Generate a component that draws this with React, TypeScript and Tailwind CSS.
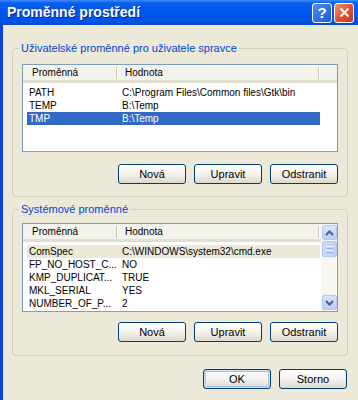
import React from 'react';

type Row = { name: string; value: string; selected?: 'focus' | 'blur' };

const userRows: Row[] = [
  { name: 'PATH', value: 'C:\\Program Files\\Common files\\Gtk\\bin' },
  { name: 'TEMP', value: 'B:\\Temp' },
  { name: 'TMP', value: 'B:\\Temp', selected: 'focus' },
];

const systemRows: Row[] = [
  { name: 'ComSpec', value: 'C:\\WINDOWS\\system32\\cmd.exe', selected: 'blur' },
  { name: 'FP_NO_HOST_C...', value: 'NO' },
  { name: 'KMP_DUPLICAT...', value: 'TRUE' },
  { name: 'MKL_SERIAL', value: 'YES' },
  { name: 'NUMBER_OF_P...', value: '2' },
];

const XpButton: React.FC<{ label: string; isDefault?: boolean }> = ({ label, isDefault }) => (
  <button
    className={`w-[68px] h-[20px] rounded-[3px] border border-[#003C74] bg-gradient-to-b from-[#FFFFFF] via-[#F4F3EE] to-[#DCD8CC] text-[11px] leading-none text-black ${
      isDefault ? 'shadow-[inset_0_0_0_1px_#CDE3FB,inset_0_0_0_2px_#A5C2EE]' : ''
    }`}
  >
    {label}
  </button>
);

const HeaderDivider = () => (
  <div className="flex h-[12px] self-center">
    <div className="w-px bg-[#C7C5B2]" />
    <div className="w-px bg-white" />
  </div>
);

const ListHeader: React.FC = () => (
  <div className="flex h-[18px] items-center bg-[#F3F2EB] border-b-[3px] border-[#E2DFD0] text-[10px]">
    <div className="w-[93px] pl-[9px] text-black">Proměnná</div>
    <HeaderDivider />
    <div className="w-[200px] pl-[7px] text-black">Hodnota</div>
    <HeaderDivider />
    <div className="flex-1" />
  </div>
);

const ListRows: React.FC<{ rows: Row[] }> = ({ rows }) => (
  <div className="mt-[3px] ml-[4px] w-[293px] text-[10px]">
    {rows.map((r) => (
      <div
        key={r.name}
        className={`flex h-[13px] items-center whitespace-nowrap ${
          r.selected === 'focus'
            ? 'bg-[#316AC5] text-white'
            : r.selected === 'blur'
            ? 'bg-[#ECE9D8] text-black'
            : 'text-black'
        }`}
      >
        <div className="w-[95px] pl-[2px]">{r.name}</div>
        <div>{r.value}</div>
      </div>
    ))}
  </div>
);

const ScrollArrow: React.FC<{ up?: boolean }> = ({ up }) => (
  <div className="h-[15px] w-[15px] rounded-[2px] border border-[#B3C6F4] bg-gradient-to-b from-[#D9E5FD] to-[#B9CEF9] flex items-center justify-center">
    <svg width="9" height="6" viewBox="0 0 9 6">
      <path
        d={up ? 'M1 5 L4.5 1.5 L8 5' : 'M1 1 L4.5 4.5 L8 1'}
        stroke="#4D6185"
        strokeWidth="2"
        fill="none"
      />
    </svg>
  </div>
);

const Scrollbar: React.FC = () => (
  <div className="w-[16px] flex flex-col items-center bg-[#F7F6F1] pt-[1px] pb-[1px]">
    <ScrollArrow up />
    <div className="mt-[1px] h-[16px] w-[15px] rounded-[2px] border border-[#B3C6F4] bg-gradient-to-r from-[#CBDAFC] to-[#BCD0F9] flex flex-col items-center justify-center gap-[1px]">
      <div className="h-px w-[7px] bg-[#EEF4FE]" />
      <div className="h-px w-[7px] bg-[#8CB0F8]" />
      <div className="h-px w-[7px] bg-[#EEF4FE]" />
      <div className="h-px w-[7px] bg-[#8CB0F8]" />
    </div>
    <div className="flex-1" />
    <ScrollArrow />
  </div>
);

const GroupBox: React.FC<{ title: string; className?: string; children: React.ReactNode }> = ({
  title,
  className,
  children,
}) => (
  <fieldset className={`border border-[#D0D0BF] rounded-[4px] px-[9px] ${className ?? ''}`}>
    <legend className="ml-[-3px] px-[2px] text-[#0046D5] leading-[13px]">{title}</legend>
    {children}
  </fieldset>
);

export default function App() {
  return (
    <div className="w-[358px] h-[400px] overflow-hidden bg-[#ECE9D8] text-[11px] font-['Liberation_Sans',Arial,sans-serif]">
      {/* title bar */}
      <div className="h-[25px] flex items-center bg-[linear-gradient(180deg,#3C8CFA_0%,#0A5EEC_12%,#0058EE_45%,#0054E6_85%,#0147D2_100%)] pl-[7px] pr-[4px]">
        <div className="flex-1 text-white font-bold text-[14px] [text-shadow:1px_1px_0_#0A1E8A]">
          Proměnné prostředí
        </div>
        <div className="flex gap-[2px]">
          <div className="w-[20px] h-[20px] rounded-[3px] border border-white bg-gradient-to-br from-[#4C8BF5] to-[#1D5BD8] flex items-center justify-center text-white font-bold text-[15px] leading-none">
            ?
          </div>
          <div className="w-[20px] h-[20px] rounded-[3px] border border-white bg-gradient-to-br from-[#F0907A] via-[#E2502D] to-[#C8391A] flex items-center justify-center">
            <svg width="11" height="11" viewBox="0 0 11 11">
              <path d="M1.5 1.5 L9.5 9.5 M9.5 1.5 L1.5 9.5" stroke="white" strokeWidth="2.2" />
            </svg>
          </div>
        </div>
      </div>

      {/* body */}
      <div className="h-[375px] border-l-[3px] border-[#0842D6] pl-[9px] pr-[10px] pt-[17px]">
        <GroupBox title="Uživatelské proměnné pro uživatele spravce" className="pb-[12px]">
          <div className="mt-[9px] h-[88px] border border-[#7F9DB9] bg-white">
            <ListHeader />
            <ListRows rows={userRows} />
          </div>
          <div className="mt-[12px] flex justify-end gap-[8px]">
            <XpButton label="Nová" />
            <XpButton label="Upravit" />
            <XpButton label="Odstranit" />
          </div>
        </GroupBox>

        <GroupBox title="Systémové proměnné" className="mt-[6px] pb-[13px]">
          <div className="mt-[7px] h-[89px] border border-[#7F9DB9] bg-white flex">
            <div className="flex-1">
              <ListHeader />
              <ListRows rows={systemRows} />
            </div>
            <Scrollbar />
          </div>
          <div className="mt-[10px] flex justify-end gap-[8px]">
            <XpButton label="Nová" />
            <XpButton label="Upravit" />
            <XpButton label="Odstranit" />
          </div>
        </GroupBox>

        <div className="mt-[13px] flex justify-end gap-[8px] pr-[1px]">
          <XpButton label="OK" isDefault />
          <XpButton label="Storno" />
        </div>
      </div>
    </div>
  );
}
